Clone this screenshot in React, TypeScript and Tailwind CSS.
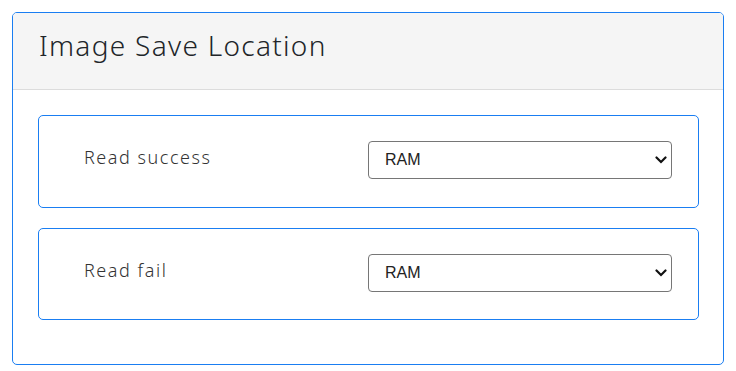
const rows = [
  { label: 'Read success', value: 'RAM', h: 'h-[93px]' },
  { label: 'Read fail', value: 'RAM', h: 'h-[92px]' },
];

function Chevron() {
  return (
    <svg
      className="pointer-events-none absolute right-[5px] top-1/2 -translate-y-1/2"
      width="12"
      height="8"
      viewBox="0 0 12 8"
      fill="none"
    >
      <path d="M1.5 1.5 L6 6 L10.5 1.5" stroke="#111" strokeWidth="2.2" strokeLinecap="round" />
    </svg>
  );
}

export default function App() {
  return (
    <div className="min-h-[371px] bg-white p-[12px] font-['Noto_Sans',sans-serif]">
      <div className="rounded-[5px] border border-[#1a7ef2] bg-white">
        {/* Header */}
        <div className="h-[77px] rounded-t-[4px] border-b border-[#dcdcdc] bg-[#f5f5f5] pl-[26px] pt-[12px]">
          <h1 className="text-[28px] leading-[40px] font-light tracking-[1.3px] text-[#212529]">
            Image Save Location
          </h1>
        </div>

        {/* Body */}
        <div className="pl-[25px] pr-[24px] pt-[25px] pb-[24px]">
          {rows.map((row) => (
            <div
              key={row.label}
              className={`mb-[20px] flex ${row.h} items-start rounded-[5px] border border-[#1a7ef2] pl-[45px] pr-[26px] pt-[25px]`}
            >
              <div className="w-[284px] pt-[3px] text-[18px] leading-[26px] font-light tracking-[1.55px] text-[#333]">
                {row.label}
              </div>
              <div className="relative flex-1">
                <select
                  defaultValue={row.value}
                  className="h-[38px] w-full appearance-none rounded-[4px] border border-[#767676] bg-white pl-[16px] font-['Liberation_Sans',sans-serif] text-[16px] text-[#222] outline-none"
                >
                  <option>RAM</option>
                  <option>SD Card</option>
                </select>
                <Chevron />
              </div>
            </div>
          ))}
        </div>
      </div>
    </div>
  );
}
